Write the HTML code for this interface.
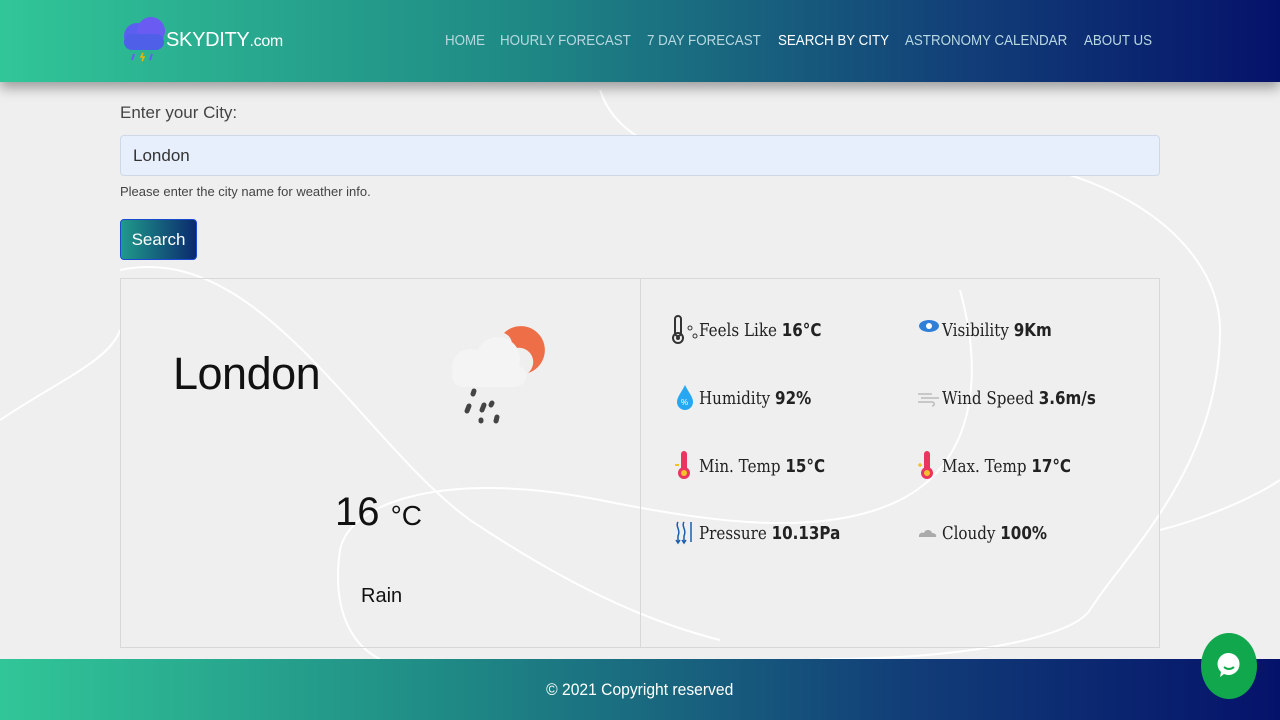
<!DOCTYPE html>
<html><head><meta charset="utf-8"><style>
*{box-sizing:border-box;margin:0;padding:0}
body{width:1280px;height:720px;overflow:hidden;background:#efefef;font-family:"Liberation Sans",sans-serif;position:relative}
.hdr{position:absolute;left:0;top:0;width:1280px;height:82px;background:linear-gradient(90deg,#31c698 0%,#1f8a85 40%,#123f78 75%,#05126a 100%);box-shadow:0 6px 12px rgba(0,0,0,.35);z-index:3}
.logo{position:absolute;left:166px;top:29px;color:#fff;font-size:20px;letter-spacing:-.3px}
.logo small{font-size:16px}
.nav{position:absolute;top:32px;font-size:15px;color:#b8d8e0;transform:scaleX(.89);transform-origin:left;white-space:nowrap}
.ftr{position:absolute;left:0;top:659px;width:1280px;height:61px;background:linear-gradient(90deg,#31c698 0%,#1f8a85 35%,#123f78 70%,#05126a 100%);color:#fff;font-size:17px;text-align:center;line-height:61px}
.ftr span{display:inline-block;transform:scaleX(.92)}
.lbl{position:absolute;left:120px;top:103px;font-size:17px;color:#444}
.inp{position:absolute;left:120px;top:135px;width:1040px;height:41px;background:#e8effc;border:1px solid #cfd8e6;border-radius:4px;font-size:17px;color:#333;padding:10px 12px}
.help{position:absolute;left:120px;top:184px;font-size:13px;color:#444}
.btn{position:absolute;left:120px;top:219px;width:77px;height:41px;border:1px solid #1a4ad0;border-radius:4px;background:linear-gradient(90deg,#1f9a8a,#0b2a6e);color:#fff;font-size:17px;text-align:center;line-height:39px}
.card{position:absolute;left:120px;top:278px;width:1040px;height:370px;border:1px solid #d8d8d8}
.card .mid{position:absolute;left:519px;top:0;width:1px;height:100%;background:#d8d8d8}
.it{position:absolute;font-family:"DejaVu Serif","Liberation Serif",serif;font-size:18px;color:#222;transform:scaleX(.84);transform-origin:left;white-space:nowrap}
.it b{font-family:"DejaVu Sans",sans-serif}
</style></head><body>
<svg style="position:absolute;left:0;top:0" width="1280" height="720"><g fill="none" stroke="#fff" stroke-width="2"><path d="M600 90 C620 150 700 180 900 160 C1080 140 1220 230 1220 330 C1220 470 1120 560 1090 610 C1070 640 950 660 820 659"/><path d="M120 270 C260 240 360 440 470 520 C560 580 640 620 720 640"/><path d="M960 290 C990 400 960 470 900 500 C820 540 700 520 600 500 C450 470 350 500 340 550 C330 620 360 650 380 659"/><path d="M0 420 C60 380 110 360 120 330"/><path d="M1160 530 C1200 520 1250 500 1280 480"/></g></svg>
<div class="hdr">
<svg style="position:absolute;left:121px;top:16px" width="46" height="50"><circle cx="16" cy="20" r="13" fill="#5b5ff0"/><circle cx="30" cy="15" r="14" fill="#6a5cf2"/><rect x="3" y="18" width="40" height="16" rx="8" fill="#4f5fe8"/><path d="M13 38l-2 6M31 38l-2 6" stroke="#6a5cf2" stroke-width="2"/><path d="M22 37l-2 4h3l-2 4" stroke="#f2b500" stroke-width="1.5" fill="none"/></svg>
<div class="logo">SKYDITY<small>.com</small></div>
<span class="nav" style="left:445px">HOME</span>
<span class="nav" style="left:500px">HOURLY FORECAST</span>
<span class="nav" style="left:647px">7 DAY FORECAST</span>
<span class="nav" style="left:778px;color:#fff">SEARCH BY CITY</span>
<span class="nav" style="left:905px">ASTRONOMY CALENDAR</span>
<span class="nav" style="left:1084px">ABOUT US</span>
</div>
<div class="lbl">Enter your City:</div>
<div class="inp">London</div>
<div class="help">Please enter the city name for weather info.</div>
<div class="btn">Search</div>
<div class="card"><div class="mid"></div></div>
<div style="position:absolute;left:173px;top:348px;font-size:45px;color:#111;letter-spacing:-.5px">London</div>
<svg style="position:absolute;left:440px;top:315px" width="110" height="115"><path d="M64 18 A24 24 0 1 1 88 58 A14 14 0 0 0 70 36 A12 12 0 0 0 64 18Z" fill="#ee6f47"/><g fill="#f4f4f4"><circle cx="30" cy="52" r="18"/><circle cx="58" cy="44" r="22"/><rect x="12" y="50" width="74" height="22" rx="11"/></g><g stroke="#444" stroke-width="5" stroke-linecap="round"><path d="M34 76l-1 3M29 91l-2 5M44 90l-2 5M52 88l-1 2M41 105l0 1M57 102l-1 4"/></g></svg>
<div style="position:absolute;left:335px;top:490px;font-size:40px;color:#111">16 <span style="font-size:28px">°C</span></div>
<div style="position:absolute;left:361px;top:585px;font-size:20px;color:#111">Rain</div>
<div class="it" style="left:699px;top:320px">Feels Like <b>16°C</b></div>
<div class="it" style="left:942px;top:320px">Visibility <b>9Km</b></div>
<div class="it" style="left:699px;top:388px">Humidity <b>92%</b></div>
<div class="it" style="left:942px;top:388px">Wind Speed <b>3.6m/s</b></div>
<div class="it" style="left:699px;top:456px">Min. Temp <b>15°C</b></div>
<div class="it" style="left:942px;top:456px">Max. Temp <b>17°C</b></div>
<div class="it" style="left:699px;top:523px">Pressure <b>10.13Pa</b></div>
<div class="it" style="left:942px;top:523px">Cloudy <b>100%</b></div>
<svg style="position:absolute;left:670px;top:314px" width="30" height="32"><rect x="5" y="2" width="6" height="20" rx="3" fill="none" stroke="#333" stroke-width="2"/><circle cx="8" cy="24" r="5" fill="none" stroke="#333" stroke-width="2"/><circle cx="8" cy="24" r="2" fill="#333"/><circle cx="20" cy="14" r="2" fill="none" stroke="#333"/><circle cx="25" cy="22" r="2" fill="none" stroke="#333"/></svg>
<svg style="position:absolute;left:918px;top:318px" width="22" height="16"><ellipse cx="11" cy="8" rx="10" ry="6" fill="#2f7fd8"/><circle cx="11" cy="8" r="3" fill="#fff"/></svg>
<svg style="position:absolute;left:675px;top:383px" width="20" height="28"><path d="M10 2 C14 10 18 14 18 19 A8 8 0 0 1 2 19 C2 14 6 10 10 2Z" fill="#27a7f2"/><text x="6" y="22" font-size="8" fill="#fff">%</text></svg>
<svg style="position:absolute;left:917px;top:389px" width="24" height="20"><g stroke="#bbb" stroke-width="1.5" fill="none"><path d="M1 5h14M4 9h18M1 13h14c3 0 3 4 0 4"/></g></svg>
<svg style="position:absolute;left:674px;top:449px" width="20" height="32"><rect x="7" y="2" width="6" height="20" rx="3" fill="#e9355f"/><circle cx="10" cy="24" r="6" fill="#e9355f"/><circle cx="10" cy="24" r="3" fill="#f6c02b"/><path d="M1 16h4" stroke="#f6c02b" stroke-width="2"/></svg>
<svg style="position:absolute;left:917px;top:449px" width="20" height="32"><rect x="7" y="2" width="6" height="20" rx="3" fill="#e9355f"/><circle cx="10" cy="24" r="6" fill="#e9355f"/><circle cx="10" cy="24" r="3" fill="#f6c02b"/><path d="M1 16h4M3 14v4" stroke="#f6c02b" stroke-width="1.5"/></svg>
<svg style="position:absolute;left:674px;top:520px" width="24" height="26"><g stroke="#1b5fae" stroke-width="1.5" fill="none"><path d="M4 2c-3 4 3 8 0 14v6M10 2c-3 4 3 8 0 14v6M17 2v20" /><path d="M2 20l2 3 2-3M8 20l2 3 2-3"/></g></svg>
<svg style="position:absolute;left:917px;top:526px" width="22" height="14"><path d="M2 10c0-3 3-4 5-3 1-4 7-4 8 0 3 0 5 2 4 4H2z" fill="#aaa"/></svg>
<div class="ftr"><span>© 2021 Copyright reserved</span></div>
<svg style="position:absolute;left:1201px;top:633px" width="56" height="66"><ellipse cx="28" cy="33" rx="28" ry="33" fill="#11a84d"/><path d="M28 20a11 11 0 1 1 -5 21l-4 3 1-5a11 11 0 0 1 8-19z" fill="#fff"/><path d="M23 34q5 4 10 0" stroke="#11a84d" stroke-width="2" fill="none"/></svg>
</body></html>
